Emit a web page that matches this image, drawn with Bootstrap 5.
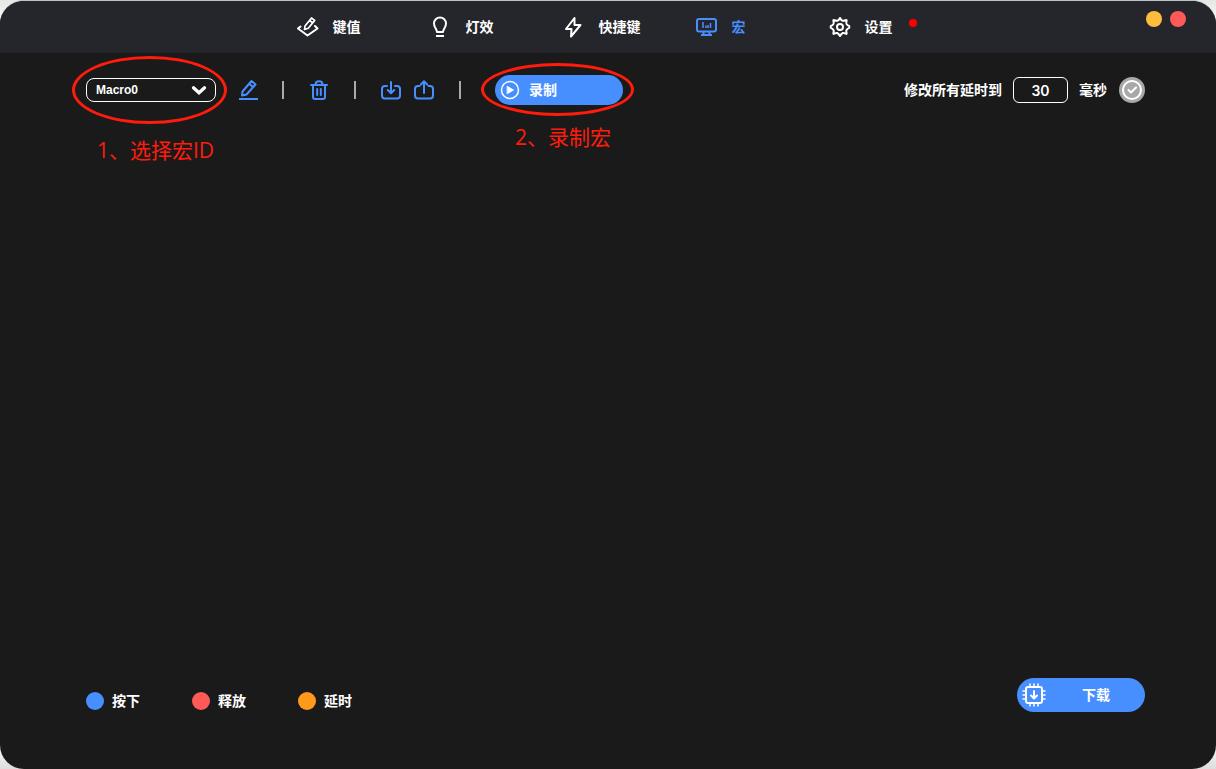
<!DOCTYPE html>
<html lang="zh-CN">
<head>
<meta charset="utf-8">
<meta name="viewport" content="width=device-width, initial-scale=1">
<title>宏</title>
<link href="https://cdn.jsdelivr.net/npm/bootstrap@5.3.0/dist/css/bootstrap.min.css" rel="stylesheet">
<style>
:root { --accent: #478fff; --mark: #ff1c0c; }
body { background: linear-gradient(#e4e8e7, #fff 30px, #fff calc(100% - 30px), #ddd); color: #fff;
  font: 700 14px/20px Inter, "Noto Sans CJK SC", sans-serif; }
.shell { background: #1a1a1a; border-top: 1px solid #bcc5c3; border-radius: 24px; overflow: hidden; }
.topbar { background: #25262b; height: 52px; }
.main-nav .nav-link { width: 133px; padding: 0 21px; gap: 14px; color: #fff; white-space: nowrap; }
.main-nav .nav-link.active { color: var(--accent); }
svg { display: block; flex: none; fill: none; stroke: currentColor; stroke-width: 2; stroke-linecap: round; stroke-linejoin: round; }
.dot { display: block; border-radius: 50%; flex: none; border: 0; padding: 0; }
.notice { width: 8px; height: 8px; background: #f00; top: 3px; left: 101px; }
.win-buttons { right: 30px; top: 10px; gap: 8px; }
.win-buttons .dot { width: 16px; height: 16px; }
.amber { background: #ffbd3e; } .coral { background: #ff5a57; }
.blue { background: var(--accent); } .orange { background: #ff991c; }
.tools { padding: 22px 71px 0 86px; }
.tool { border: 0; padding: 0; background: none; color: var(--accent); }
.macro-select { width: 130px; height: 24px; padding: 0 9px; border: 1px solid #fff; border-radius: 8px; color: #fff; appearance: none;
  font: 700 12px/20px "Liberation Sans", sans-serif;
  background: #1a1a1a url("data:image/svg+xml,%3Csvg xmlns='http://www.w3.org/2000/svg' viewBox='0 0 14 10'%3E%3Cpath d='M2 2.5 7 7l5-4.5' fill='none' stroke='white' stroke-width='3' stroke-linecap='round'/%3E%3C/svg%3E") right 8px center / 16px 11px no-repeat; }
.edit { margin-left: 22px; }
.bar { width: 2px; height: 18px; background: #aaa; margin: 0 25px; }
.edit + .bar { margin-left: 24px; }
.export { margin-left: 13px; }
.record-wrap { margin-left: 9px; }
.pill { background: var(--accent); color: #fff; border: 0; width: 128px; border-radius: 17px; font-weight: 700; }
.record { height: 30px; padding: 0 5px; gap: 9px; }
.download { height: 34px; padding: 0 5px; gap: 36px; }
.delay { gap: 11px; }
.delay .tool { margin-left: 1px; }
.delay-input { width: 55px; height: 26px; border: 1px solid #fff; border-radius: 6px; background: none; color: #fff; text-align: center; padding: 0; font-weight: 600; }
.ring { border: 3px solid var(--mark); border-radius: 50%; pointer-events: none; }
.ring-select { left: -14px; top: -22px; width: 155px; height: 68px; }
.ring-record { left: -14px; top: -12px; width: 153px; height: 53px; }
.note { color: var(--mark); font: 400 21px/28px "Open Sans", "Noto Sans CJK SC", sans-serif; white-space: nowrap; }
.note-select { left: 11px; top: 58px; }
.note-record { left: 20px; top: 48px; }
.foot { padding: 0 71px 57px 86px; }
.legend { gap: 52px; padding-top: 12px; }
.legend .dot { width: 18px; height: 18px; }
.legend li { gap: 8px; }
</style>
</head>
<body>
<div class="shell min-vh-100 d-flex flex-column">
  <header class="topbar position-relative d-flex justify-content-center align-items-center">
    <nav class="main-nav nav flex-nowrap" aria-label="主导航">
      <a class="nav-link d-flex align-items-center" href="#keys">
        <svg width="22" height="22" viewBox="0 0 22 22"><path d="m3.500 10.500-2.500 2 9.500 7 10-7-2.500-2.500"/><path stroke-width="1.700" d="m8 10 6.500-8 3.200 2.400-6.400 7.800-3.800 1.200zM12.700 4.500l3 2.400"/></svg>键值</a>
      <a class="nav-link d-flex align-items-center" href="#light">
        <svg width="22" height="22" viewBox="0 0 22 22"><path d="M7 16c0-3-3-4.500-3-8.500a6 6 0 0 1 12 0c0 4-3 5.500-3 8.500z"/><path stroke-linecap="butt" d="M6 20h8"/></svg>灯效</a>
      <a class="nav-link d-flex align-items-center" href="#hotkeys">
        <svg width="22" height="22" viewBox="0 0 22 22"><path d="M11.500 2 3 13h5.500L8 20.500 17.500 9h-6z"/></svg>快捷键</a>
      <a class="nav-link active d-flex align-items-center" href="#macro" aria-current="page">
        <svg width="22" height="22" viewBox="0 0 22 22"><rect x="1" y="3" width="19" height="12.500" rx="2"/><path stroke-linecap="butt" d="M7.500 15v4M13.500 15v4M5 19h11"/><path stroke-linecap="butt" stroke-width="1.500" d="M7 6v6M10 9.500v2.500M12 9v3M14.500 7v5"/></svg>宏</a>
      <a class="nav-link position-relative d-flex align-items-center" href="#settings">
        <svg width="22" height="22" viewBox="0 0 22 22"><path d="M11 2q1.300 2.500 2.500 2.800 1.500.3 3.900-.8.300 0 .300.600-.8 2-.2 3.300.7 1.200 2.700 2.100.300.900 0 1.900-2 .9-2.700 2.100-.6 1.300.2 3.300 0 .6-.300.600-2.400-1.100-3.900-.8Q12.300 17.800 11 20q-1.300-2.200-2.500-2.900-1.500-.3-3.900.8-.3 0-.3-.6.8-2 .2-3.300-.7-1.200-2.700-2.100-.3-.9 0-1.900 2-.9 2.700-2.100.6-1.300-.2-3.300 0-.6.300-.6 2.400 1.100 3.900.8Q9.700 4.500 11 2z"/><circle cx="11" cy="11" r="3"/></svg>设置
        <span class="dot notice position-absolute"></span></a>
    </nav>
    <div class="win-buttons position-absolute d-flex">
      <button class="dot amber" type="button" aria-label="最小化"></button>
      <button class="dot coral" type="button" aria-label="关闭"></button>
    </div>
  </header>

  <main class="flex-grow-1 d-flex flex-column">
    <div class="tools d-flex align-items-center">
      <div class="position-relative">
        <select class="macro-select d-block" aria-label="宏 ID"><option>Macro0</option></select>
        <span class="ring ring-select position-absolute"></span>
        <span class="note note-select position-absolute">1、选择宏ID</span>
      </div>
      <button class="tool edit" type="button" aria-label="重命名"><svg width="20" height="22" viewBox="0 0 20 22"><path stroke-linecap="butt" d="M1 20h19"/><path d="M4.500 12.500 13.500 2l4 3.500L8.500 15.500 4 16.500zM11.500 5l3.500 3"/></svg></button>
      <span class="bar"></span>
      <button class="tool" type="button" aria-label="删除"><svg width="20" height="22" viewBox="0 0 20 22"><path d="M2 6h16M6.500 5.500C6.500 1 13.500 1 13.500 5.500M4 6v12q0 2 2 2h8q2 0 2-2V6M8.200 10v6M11.800 10v6"/></svg></button>
      <span class="bar"></span>
      <button class="tool" type="button" aria-label="导入"><svg width="20" height="22" viewBox="0 0 20 22"><path d="M6 7H4Q1 7 1 10v6.500q0 3 3 3h12q3 0 3-3V10q0-3-3-3h-2M10 3v11M6.800 11l3.200 3.200 3.200-3.200"/></svg></button>
      <button class="tool export" type="button" aria-label="导出"><svg width="20" height="22" viewBox="0 0 20 22"><path d="M5.500 7H4Q1 7 1 10v6.500q0 3 3 3h12q3 0 3-3V10q0-3-3-3h-1.500M10 14V3M6.800 5.500 10 2.300l3.200 3.200"/></svg></button>
      <span class="bar"></span>
      <div class="record-wrap position-relative">
        <button class="pill record d-flex align-items-center" type="button">
          <svg width="20" height="20" viewBox="0 0 20 20"><circle cx="10" cy="10" r="8.500" stroke-width="1.500"/><path fill="currentColor" stroke-width="1" d="m7.500 6.500 6 3.500-6 3.500z"/></svg>录制</button>
        <span class="ring ring-record position-absolute"></span>
        <span class="note note-record position-absolute">2、录制宏</span>
      </div>
      <div class="delay ms-auto d-flex align-items-center text-nowrap">
        <label for="delay">修改所有延时到</label>
        <input class="delay-input" id="delay" type="text" inputmode="numeric" value="30">
        <span>毫秒</span>
        <button class="tool" type="button" aria-label="应用"><svg width="26" height="26" viewBox="0 0 26 26"><circle cx="13" cy="13" r="13" fill="#a8a8a8" stroke="none"/><circle cx="13" cy="13" r="9" stroke="#fff"/><path stroke="#fff" d="m9.500 13 2.500 2.500 5-5"/></svg></button>
      </div>
    </div>

    <div class="foot mt-auto d-flex justify-content-between align-items-center">
      <ul class="legend list-unstyled d-flex mb-0">
        <li class="d-flex align-items-center"><span class="dot blue"></span>按下</li>
        <li class="d-flex align-items-center"><span class="dot coral"></span>释放</li>
        <li class="d-flex align-items-center"><span class="dot orange"></span>延时</li>
      </ul>
      <button class="pill download d-flex align-items-center" type="button">
        <svg width="24" height="24" viewBox="0 0 24 24"><rect x="4" y="4" width="16" height="16" rx="2"/><path stroke-width="1.500" d="M8 1v3M12 1v3M16 1v3M8 20v3M12 20v3M16 20v3M1 8h3M1 12h3M1 16h3M20 8h3M20 12h3M20 16h3"/><path d="M12 8v7M9 12.500l3 3 3-3"/></svg>下载</button>
    </div>
  </main>
</div>
<script src="https://cdn.jsdelivr.net/npm/bootstrap@5.3.0/dist/js/bootstrap.bundle.min.js"></script>
</body>
</html>
